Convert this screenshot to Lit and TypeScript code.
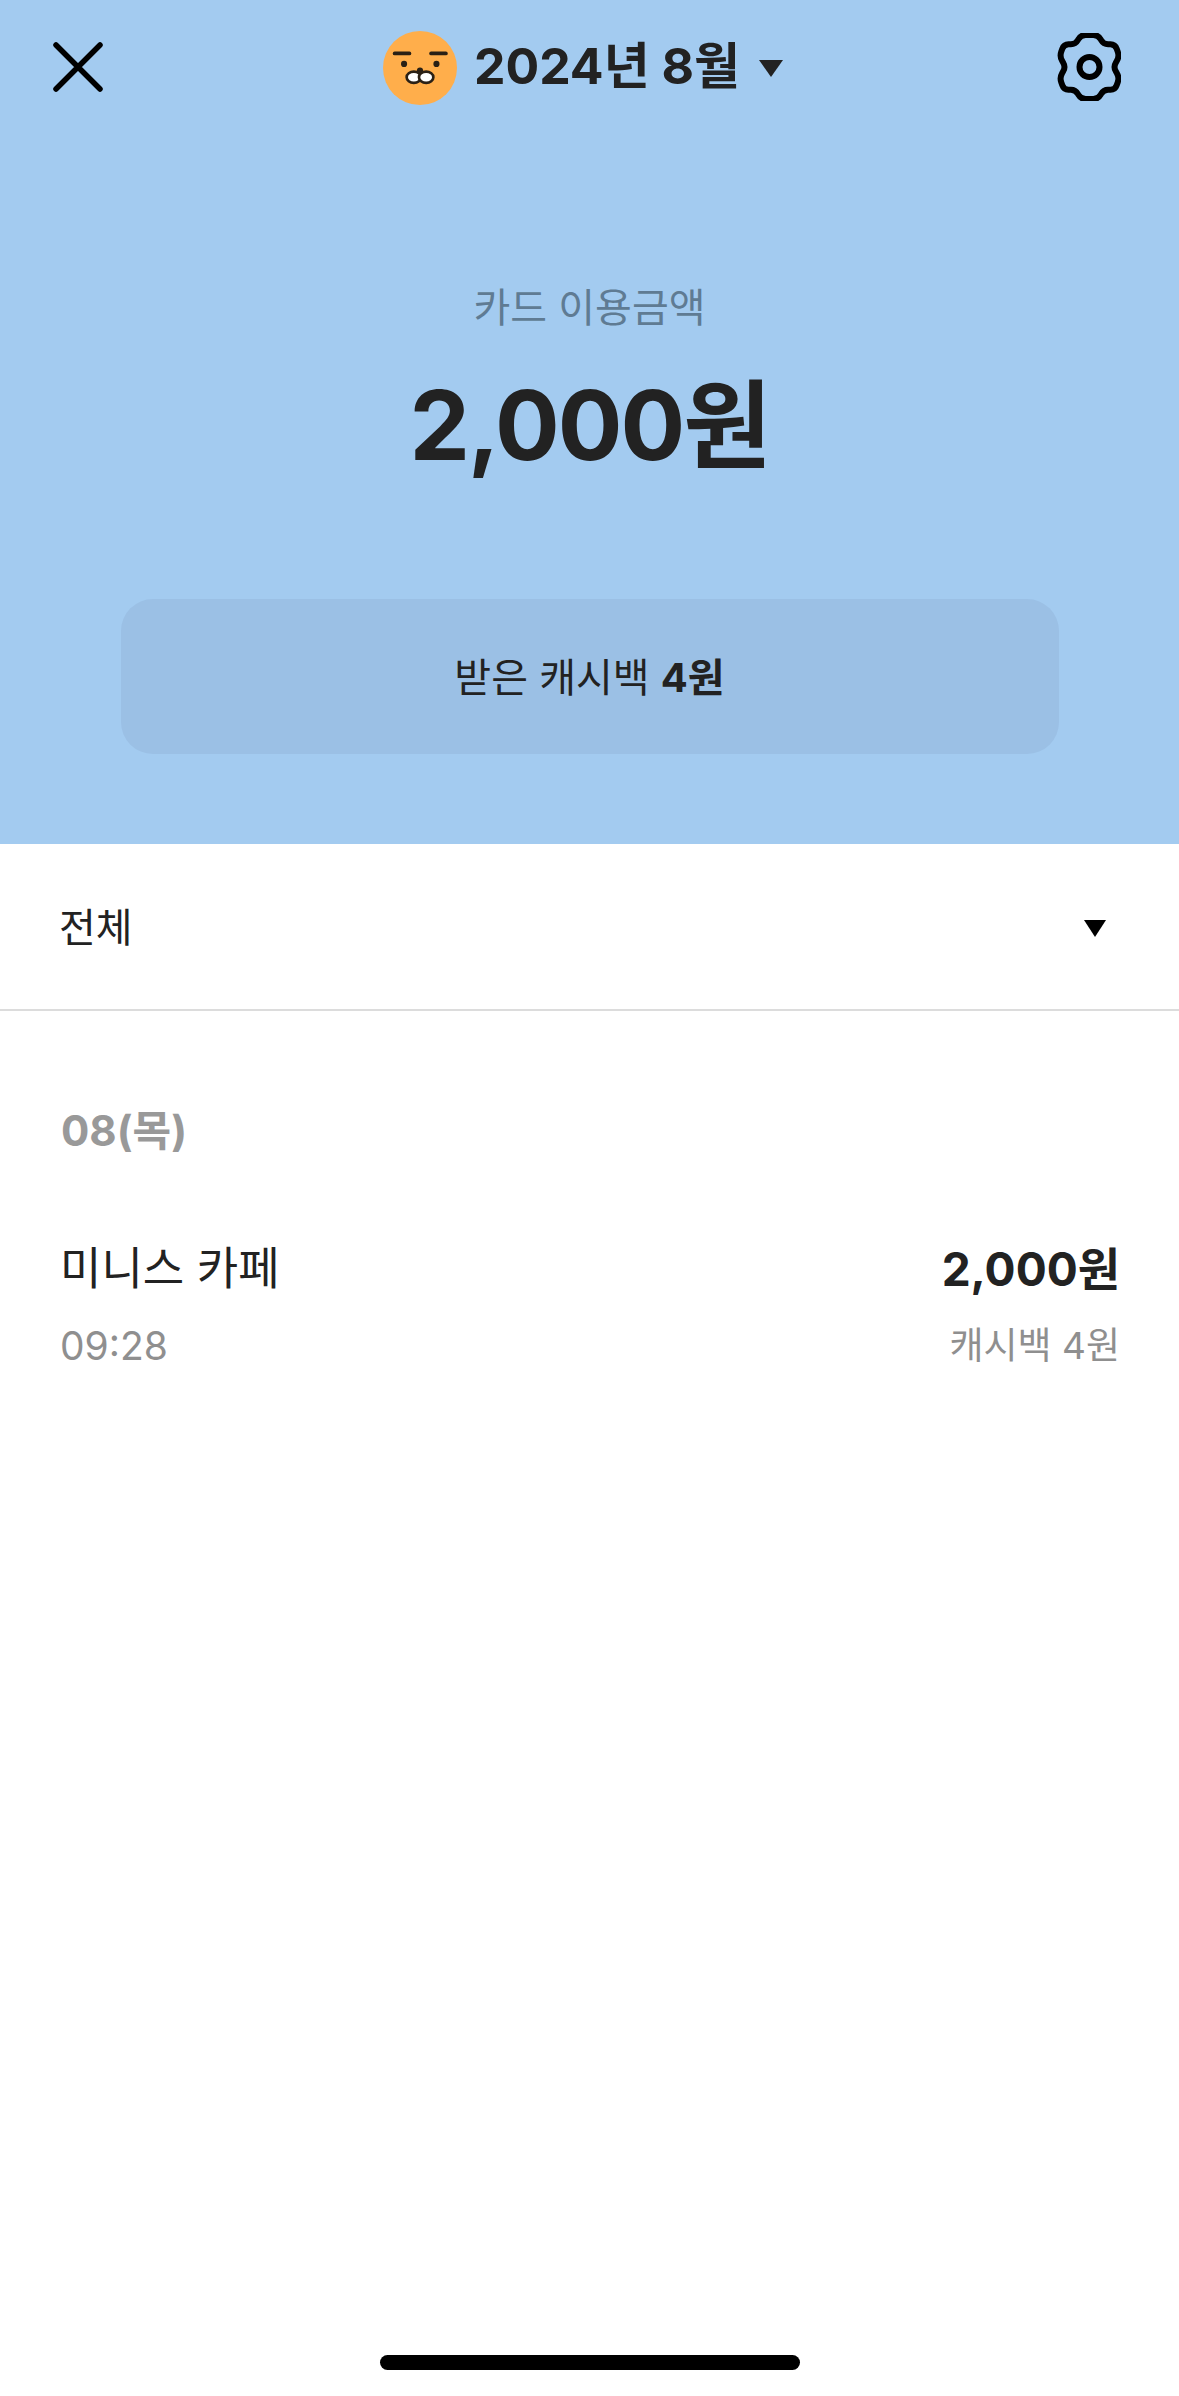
import {LitElement, html, css, svg} from 'lit';
import {customElement} from 'lit/decorators.js';

// corners of the gear outline around its centre, each one rounded off below
const GEAR_POINTS = [
  [-10, -32], [10, -32], [16, -22.5], [29, -23], [34, -10.5], [27, 0],
  [34, 10.5], [29, 23], [16, 22.5], [10, 32], [-10, 32], [-16, 22.5],
  [-29, 23], [-34, 10.5], [-27, 0], [-34, -10.5], [-29, -23], [-16, -22.5],
];

function gearPath(radius = 5) {
  const pts = GEAR_POINTS.map(([x, y]) => [32.5 + x * 0.88, 34 + y]);
  const towards = (p: number[], q: number[]) => {
    const len = Math.hypot(q[0] - p[0], q[1] - p[1]);
    const k = Math.min(radius, len / 2) / len;
    return `${(p[0] + (q[0] - p[0]) * k).toFixed(2)} ${(p[1] + (q[1] - p[1]) * k).toFixed(2)}`;
  };
  let d = '';
  pts.forEach((p, i) => {
    const prev = pts[(i + pts.length - 1) % pts.length];
    const next = pts[(i + 1) % pts.length];
    d += `${i === 0 ? 'M' : 'L'}${towards(p, prev)}Q${p[0].toFixed(2)} ${p[1].toFixed(2)} ${towards(p, next)}`;
  });
  return d + 'Z';
}

const closeIcon = html`<svg class="close" viewBox="0 0 50 50" fill="none" stroke="#000" stroke-width="5.5" stroke-linecap="round">
  <path d="M3 3L47 47M47 3L3 47"></path>
</svg>`;

const gearIcon = html`<svg class="gear" viewBox="0 0 64 68" fill="none" stroke="#000" stroke-width="6" stroke-linejoin="round">
  <path d="${gearPath()}"></path>
  <circle cx="32.5" cy="34" r="10"></circle>
</svg>`;

const face = html`<svg class="avatar" viewBox="0 0 72 72">
  ${svg`
    <circle cx="36" cy="36" r="36" fill="#ffae4b"></circle>
    <rect x="9.5" y="20" width="18" height="3.6" rx="1.8" fill="#2a2015"></rect>
    <rect x="45" y="20" width="18" height="3.6" rx="1.8" fill="#2a2015"></rect>
    <circle cx="20.5" cy="32" r="3" fill="#2a2015"></circle>
    <circle cx="52" cy="32" r="3" fill="#2a2015"></circle>
    <ellipse cx="30" cy="45" rx="7" ry="5.5" fill="#fff" stroke="#2a2015" stroke-width="2.6"></ellipse>
    <ellipse cx="42" cy="45" rx="7" ry="5.5" fill="#fff" stroke="#2a2015" stroke-width="2.6"></ellipse>
    <circle cx="36" cy="38.5" r="3" fill="#2a2015"></circle>
  `}
</svg>`;

@customElement('app-root')
export class AppRoot extends LitElement {
  static styles = css`
    :host {
      display: block;
      width: 1179px;
      height: 2396px;
      background: #fff;
      color: #222;
      font-family: Inter, 'Noto Sans CJK KR', sans-serif;
      overflow: hidden;
    }
    .page {
      display: flex;
      flex-direction: column;
      height: 100%;
    }
    .hero {
      display: flex;
      flex-direction: column;
      align-items: center;
      height: 844px;
      background: #a3cbf0;
      box-sizing: border-box;
    }
    .top {
      align-self: stretch;
      display: flex;
      align-items: center;
      justify-content: space-between;
      height: 74px;
      margin-top: 31px;
      padding: 0 58px 0 53px;
    }
    .close {
      width: 50px;
      height: 50px;
      margin-top: -3px;
    }
    .gear {
      width: 64px;
      height: 68px;
      margin-top: -2px;
    }
    .month {
      display: flex;
      align-items: center;
      margin-left: 6px;
    }
    .avatar {
      width: 74px;
      height: 74px;
    }
    .month-label {
      margin-left: 17px;
      font-size: 50px;
      font-weight: 700;
      line-height: 74px;
      margin-top: -4px;
    }
    .caret {
      width: 0;
      height: 0;
      border-left: 12.5px solid transparent;
      border-right: 12.5px solid transparent;
      border-top: 17px solid #222;
      margin-left: 19px;
    }
    .sum-label {
      margin-top: 172px;
      font-size: 40px;
      line-height: 62px;
      color: #5f7b93;
    }
    .sum {
      margin-top: 26px;
      font-size: 96px;
      font-weight: 700;
      line-height: 120px;
      letter-spacing: -2px;
    }
    .cashback {
      display: flex;
      align-items: center;
      justify-content: center;
      gap: 0.28em;
      width: 938px;
      height: 155px;
      box-sizing: border-box;
      padding-bottom: 3px;
      margin-top: 114px;
      border-radius: 32px;
      background: #9bc0e5;
      font-size: 40px;
    }
    .cashback b {
      font-weight: 700;
    }
    .filter {
      display: flex;
      align-items: center;
      justify-content: space-between;
      height: 167px;
      box-sizing: border-box;
      padding: 0 73px 0 59px;
      border-bottom: 2px solid #dcdcdc;
      font-size: 40px;
    }
    .filter-label {
      margin-top: -3px;
    }
    .filter .caret {
      border-left-width: 11.5px;
      border-right-width: 11.5px;
      border-top-color: #000;
      margin: 4px 0 0;
    }
    .list {
      padding: 91px 59px 0 60px;
    }
    .day {
      margin-left: 1px;
      font-size: 42px;
      font-weight: 700;
      line-height: 58px;
      color: #999;
    }
    .row {
      display: flex;
      justify-content: space-between;
      margin-top: 78px;
    }
    .col {
      display: flex;
      flex-direction: column;
      gap: 15px;
    }
    .col.end {
      align-items: flex-end;
    }
    .name {
      font-size: 45px;
      line-height: 62px;
    }
    .amount {
      font-size: 46px;
      font-weight: 700;
      line-height: 62px;
    }
    .sub {
      font-size: 37px;
      line-height: 62px;
      color: #8f8f8f;
    }
    .time {
      font-size: 39px;
    }
    .spacer {
      flex: 1;
    }
    .home {
      align-self: center;
      width: 420px;
      height: 15px;
      margin-bottom: 26px;
      border-radius: 8px;
      background: #000;
    }
  `;

  render() {
    return html`
      <div class="page">
        <section class="hero">
          <div class="top">
            ${closeIcon}
            <div class="month">
              ${face}
              <span class="month-label">2024년 8월</span>
              <span class="caret"></span>
            </div>
            ${gearIcon}
          </div>
          <div class="sum-label">카드 이용금액</div>
          <div class="sum">2,000원</div>
          <div class="cashback"><span>받은 캐시백</span><b>4원</b></div>
        </section>
        <div class="filter"><span class="filter-label">전체</span><span class="caret"></span></div>
        <div class="list">
          <div class="day">08(목)</div>
          <div class="row">
            <div class="col">
              <span class="name">미니스 카페</span>
              <span class="sub time">09:28</span>
            </div>
            <div class="col end">
              <span class="amount">2,000원</span>
              <span class="sub">캐시백 4원</span>
            </div>
          </div>
        </div>
        <div class="spacer"></div>
        <div class="home"></div>
      </div>
    `;
  }
}
